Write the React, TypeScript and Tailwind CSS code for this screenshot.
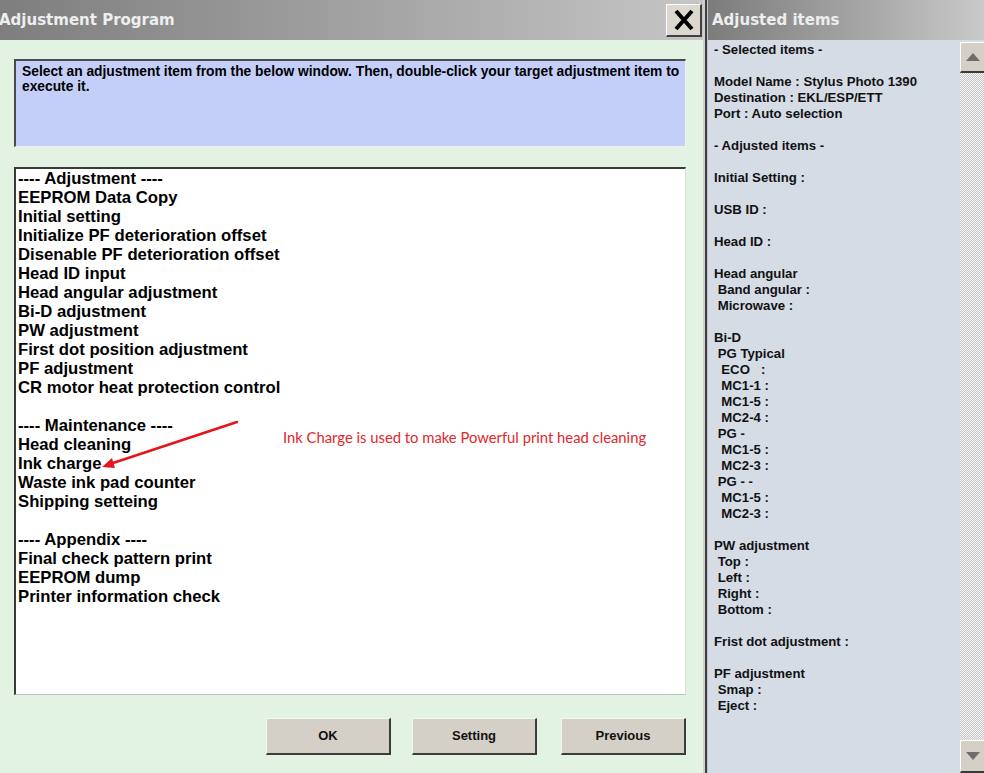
import React from 'react'

const adjustmentItems = [
    '---- Adjustment ----',
    'EEPROM Data Copy',
    'Initial setting',
    'Initialize PF deterioration offset',
    'Disenable PF deterioration offset',
    'Head ID input',
    'Head angular adjustment',
    'Bi-D adjustment',
    'PW adjustment',
    'First dot position adjustment',
    'PF adjustment',
    'CR motor heat protection control',
    '',
    '---- Maintenance ----',
    'Head cleaning',
    'Ink charge',
    'Waste ink pad counter',
    'Shipping setteing',
    '',
    '---- Appendix ----',
    'Final check pattern print',
    'EEPROM dump',
    'Printer information check',
]

const adjustedLines = [
    '- Selected items -',
    '',
    'Model Name : Stylus Photo 1390',
    'Destination : EKL/ESP/ETT',
    'Port : Auto selection',
    '',
    '- Adjusted items -',
    '',
    'Initial Setting :',
    '',
    'USB ID :',
    '',
    'Head ID :',
    '',
    'Head angular',
    ' Band angular :',
    ' Microwave :',
    '',
    'Bi-D',
    ' PG Typical',
    '  ECO   :',
    '  MC1-1 :',
    '  MC1-5 :',
    '  MC2-4 :',
    ' PG -',
    '  MC1-5 :',
    '  MC2-3 :',
    ' PG - -',
    '  MC1-5 :',
    '  MC2-3 :',
    '',
    'PW adjustment',
    ' Top :',
    ' Left :',
    ' Right :',
    ' Bottom :',
    '',
    'Frist dot adjustment :',
    '',
    'PF adjustment',
    ' Smap :',
    ' Eject :',
]

function WinButton({ label, className = '' }: { label: string; className?: string }) {
    return (
        <button className={`w-[125px] h-[37px] bg-[#d4cfc7] border-t border-l border-t-[#f4f4f4] border-l-[#f4f4f4] border-b-2 border-r-2 border-b-[#3c3c3c] border-r-[#3c3c3c] text-[13px] font-bold text-[#111] ${className}`}>
            {label}
        </button>
    )
}

export default function App() {
    return (
        <div className="relative w-[984px] h-[773px] flex overflow-hidden bg-[#e3f3e3] font-['Liberation_Sans',Arial,sans-serif]">
            {/* Left window */}
            <div className="w-[703px] h-full flex flex-col bg-[#e3f3e3]">
                <div className="h-[40px] flex items-center justify-between bg-gradient-to-r from-[#7e7e7e] to-[#c6c6c6]">
                    <span className="font-['DejaVu_Sans',sans-serif] font-bold text-[15px] text-[#eeeeee] -ml-px">
                        Adjustment Program
                    </span>
                    <button className="w-[36px] h-[33px] mr-[1px] flex items-center justify-center bg-[#dcd8d0] border-t border-l border-t-white border-l-white border-b-2 border-r-2 border-b-[#404040] border-r-[#404040]">
                        <svg width="22" height="22" viewBox="0 0 22 22">
                            <path d="M3 2 L19 20 M19 2 L3 20" stroke="#000" strokeWidth="4" />
                        </svg>
                    </button>
                </div>

                <div className="flex-1 flex flex-col px-[14px] pr-[17px]">
                    {/* Description */}
                    <div className="mt-[19px] h-[88px] bg-[#c4cff9] border-t-2 border-l-2 border-t-[#4a4a4a] border-l-[#4a4a4a] border-b border-r border-b-[#f0f0f0] border-r-[#f0f0f0] pl-[6px] pr-[2px] pt-[3px]">
                        <p className="font-['Liberation_Sans_Narrow','Liberation_Sans',sans-serif] text-[13.8px] leading-[15px] font-bold text-black">
                            Select an adjustment item from the below window. Then, double-click your target adjustment item to execute it.
                        </p>
                    </div>

                    {/* Item list */}
                    <div className="relative mt-[20px] h-[528px] bg-white border-t-2 border-l-2 border-t-[#3a3a3a] border-l-[#3a3a3a] border-b border-r border-b-[#b8c4b8] border-r-[#d8e0d8] pl-[2px]">
                        {adjustmentItems.map((item, i) => (
                            <div key={i} className="h-[19px] leading-[19px] text-[16.7px] font-bold text-black whitespace-pre">
                                {item || ' '}
                            </div>
                        ))}
                        <span className="absolute left-[267px] top-[257px] font-['Lato',sans-serif] text-[14.8px] text-[#e3262b]">
                            Ink Charge is used to make Powerful print head cleaning
                        </span>
                    </div>

                    {/* Buttons */}
                    <div className="mt-[23px] flex justify-end">
                        <WinButton label="OK" className="mr-[21px]" />
                        <WinButton label="Setting" className="mr-[24px]" />
                        <WinButton label="Previous" />
                    </div>
                </div>
            </div>

            {/* Divider */}
            <div className="w-[5px] h-full flex">
                <div className="w-[2px] bg-[#cfcfcf]" />
                <div className="w-[2px] bg-[#3e3e3e]" />
                <div className="w-[1px] bg-[#bfc4cc]" />
            </div>

            {/* Right panel */}
            <div className="flex-1 h-full flex flex-col bg-[#d6dce6]">
                <div className="h-[40px] flex items-center bg-gradient-to-r from-[#7c7c7c] to-[#c9c9c9] pl-[4px]">
                    <span className="font-['DejaVu_Sans',sans-serif] font-bold text-[15px] text-[#eeeeee]">
                        Adjusted items
                    </span>
                </div>
                <div className="flex-1 flex min-h-0">
                    <div className="flex-1 pl-[6px] pt-[2px]">
                        {adjustedLines.map((line, i) => (
                            <div key={i} className="h-[16px] leading-[16px] text-[13.2px] font-bold text-[#111] whitespace-pre">
                                {line || ' '}
                            </div>
                        ))}
                    </div>
                    <div className="w-[24px] mt-[2px] flex flex-col bg-[repeating-conic-gradient(#c6c6c6_0_25%,#f4f4f4_0_50%)] bg-[length:2px_2px]">
                        <div className="h-[31px] flex items-center justify-center bg-[#d4d0c8] border-t border-l border-t-white border-l-white border-b-2 border-b-[#3a3a3a]">
                            <svg width="16" height="10" viewBox="0 0 16 10">
                                <path d="M8 1 L15 9 L1 9 Z" fill="#6e6e6e" />
                            </svg>
                        </div>
                        <div className="flex-1" />
                        <div className="h-[33px] flex items-center justify-center bg-[#d4d0c8] border-t border-l border-t-white border-l-white border-b-2 border-b-[#3a3a3a]">
                            <svg width="16" height="10" viewBox="0 0 16 10">
                                <path d="M1 1 L15 1 L8 9 Z" fill="#6e6e6e" />
                            </svg>
                        </div>
                    </div>
                </div>
            </div>

            {/* Annotation arrow */}
            <svg className="absolute left-0 top-0 pointer-events-none" width="984" height="773">
                <line x1="237" y1="422" x2="110" y2="464" stroke="#e8141c" strokeWidth="2.6" strokeLinecap="round" />
                <path d="M102 467 L115 468 L112 458 Z" fill="#e8141c" />
            </svg>
        </div>
    )
}
